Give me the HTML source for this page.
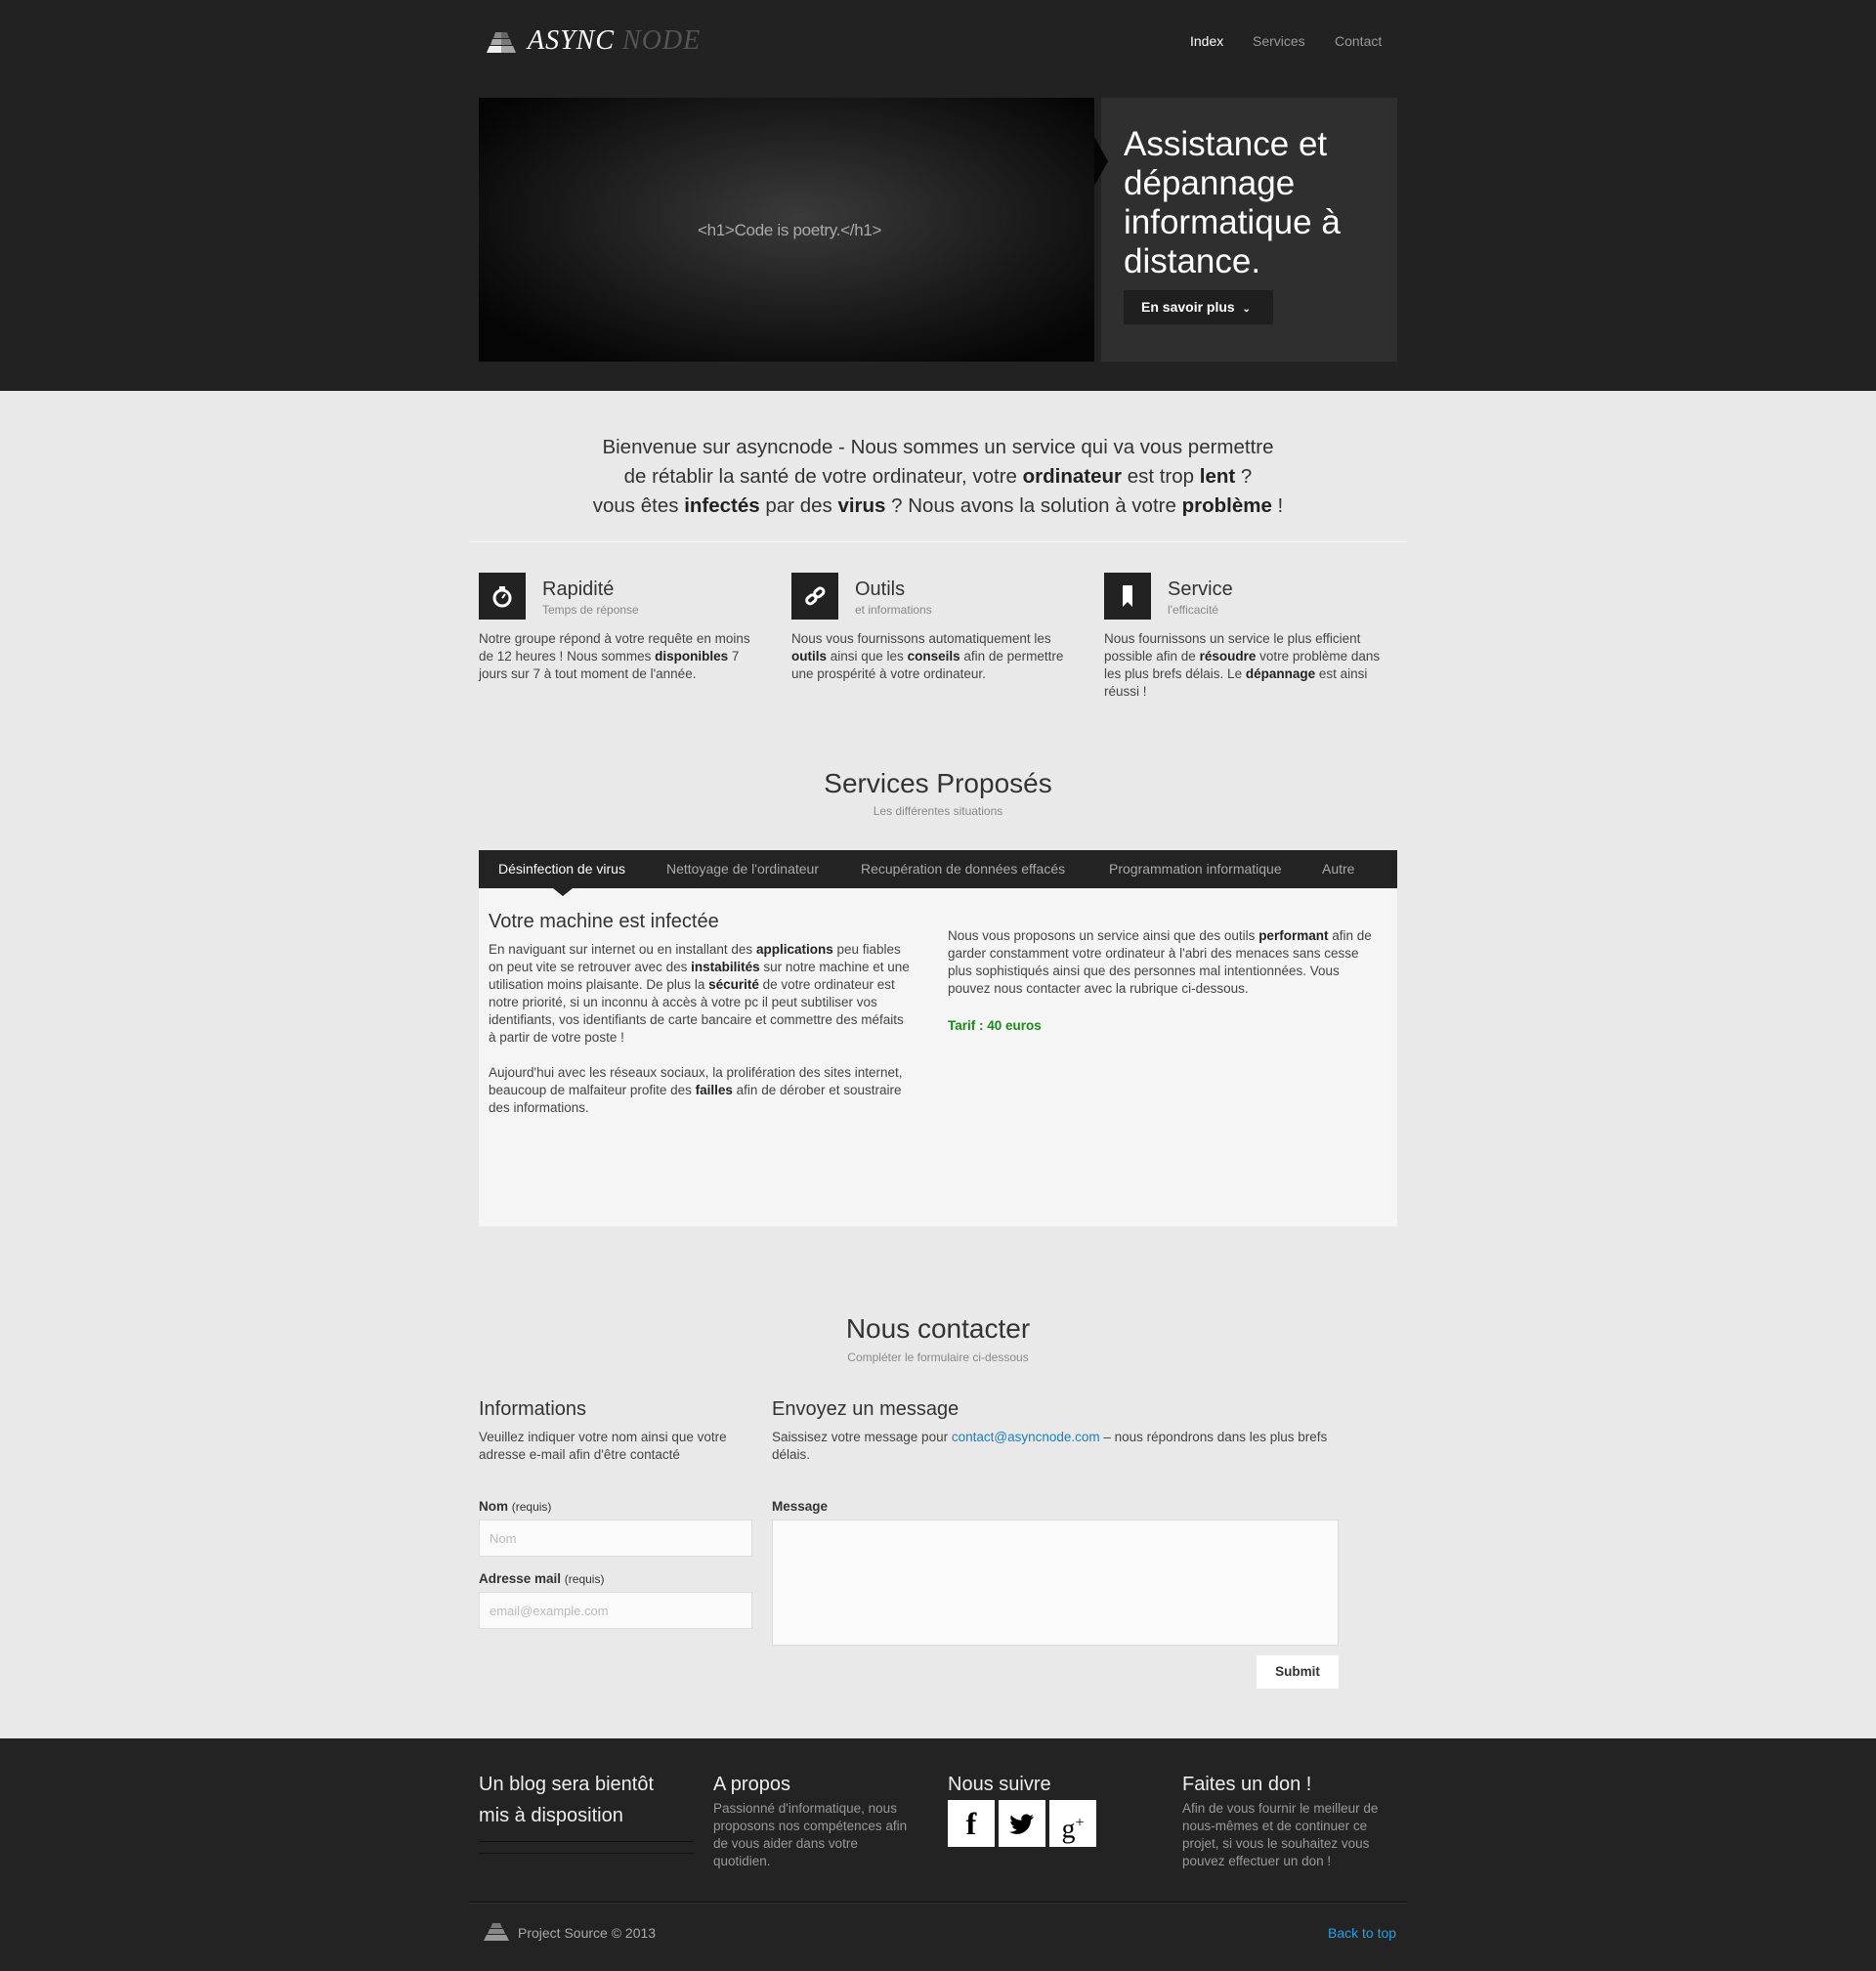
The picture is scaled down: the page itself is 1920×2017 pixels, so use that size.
<!DOCTYPE html>
<html><head><meta charset="utf-8">
<style>
*{box-sizing:border-box;margin:0;padding:0}
body{width:1920px;height:2017px;background:#e9e9e9;font-family:"Liberation Sans",Arial,sans-serif;color:#333;position:relative;overflow:hidden}
.abs{position:absolute}
#hdr{left:0;top:0;width:1920px;height:400px;background:#222}
.nav{top:34px;font-size:14px;color:#999}
#foot{left:0;top:1779px;width:1920px;height:238px;background:#232323}
p{font-size:13.5px;line-height:18px}
b{color:#222}
.ic{width:48px;height:48px;background:#222}
.ft{font-size:20px;color:#333;top:592px}
.fs{font-size:12px;color:#888;top:617px}
.fp{top:645px;width:296px;color:#444}
.tab{top:881px;font-size:14px;color:#aaa}
label{position:absolute;font-size:13.5px;font-weight:bold;color:#333}
label span{font-weight:normal;font-size:12px}
.inp{background:#fafafa;border:1px solid #ddd}
.fh{top:1810px;font-size:20px;color:#eee;line-height:32px}
.fpp{color:#999;font-size:13.5px;line-height:18px}
.soc{top:1842px;width:48px;height:48px;background:#fff;color:#000;text-align:center;font-family:"Liberation Serif",serif;font-weight:bold;font-size:32px;line-height:48px}
</style></head><body>
<div id="hdr" class="abs"></div>
<svg class="abs" style="left:493px;top:33px" width="40" height="22" viewBox="0 0 40 22">
<polygon points="14,0 26,0 28,6 12,6" fill="#888"/><polygon points="11,7 29,7 31,13 9,13" fill="#aaa"/><polygon points="8,14 32,14 35,21 5,21" fill="#eee"/><rect x="20" y="0" width="15" height="22" fill="#222" opacity=".35"/>
</svg>
<div class="abs" style="left:540px;top:26px;font-family:'Liberation Serif',serif;font-style:italic;font-size:28px;letter-spacing:1px;color:#fff">ASYNC <span style="color:#555">NODE</span></div>
<div class="abs nav" style="left:1218px;color:#fff">Index</div>
<div class="abs nav" style="left:1282px">Services</div>
<div class="abs nav" style="left:1366px">Contact</div>
<div class="abs" style="left:490px;top:100px;width:630px;height:270px;background:radial-gradient(ellipse at 52% 45%,#3a3a3a 0%,#1e1e1e 45%,#050505 85%)"></div>
<div class="abs" style="left:714px;top:226px;font-size:17px;color:#aaa;letter-spacing:-0.3px">&lt;h1&gt;Code is poetry.&lt;/h1&gt;</div>
<div class="abs" style="left:1127px;top:100px;width:303px;height:270px;background:#2f2f2f"></div>
<div class="abs" style="left:1120px;top:140px;width:0;height:0;border-top:25px solid transparent;border-bottom:25px solid transparent;border-left:14px solid #050505"></div>
<div class="abs" style="left:1150px;top:128px;font-size:35px;line-height:40px;color:#fff;width:260px">Assistance et dépannage informatique à distance.</div>
<div class="abs" style="left:1150px;top:297px;width:153px;height:35px;background:#1f1f1f;color:#fff;font-size:14px;font-weight:bold;line-height:35px;padding-left:18px">En savoir plus &nbsp;<span style="font-size:10px">⌄</span></div>

<div class="abs" style="left:560px;top:443px;width:800px;text-align:center;font-size:20.5px;line-height:30px;color:#333">Bienvenue sur asyncnode - Nous sommes un service qui va vous permettre<br>de rétablir la santé de votre ordinateur, votre <b>ordinateur</b> est trop <b>lent</b> ?<br>vous êtes <b>infectés</b> par des <b>virus</b> ? Nous avons la solution à votre <b>problème</b> !</div>
<div class="abs" style="left:480px;top:554px;width:960px;height:1px;background:#ccc;border-bottom:1px solid #f6f6f6"></div>

<div class="abs ic" style="left:490px;top:586px"><svg width="48" height="48"><circle cx="24" cy="26" r="8" fill="none" stroke="#fff" stroke-width="3"/><rect x="21" y="14" width="6" height="3" fill="#fff"/><path d="M24 26 L27 22" stroke="#fff" stroke-width="2"/></svg></div>
<div class="abs ft" style="left:555px">Rapidité</div><div class="abs fs" style="left:555px">Temps de réponse</div>
<p class="abs fp" style="left:490px">Notre groupe répond à votre requête en moins de 12 heures ! Nous sommes <b>disponibles</b> 7 jours sur 7 à tout moment de l'année.</p>
<div class="abs ic" style="left:810px;top:586px"><svg width="48" height="48"><g fill="none" stroke="#fff" stroke-width="3"><rect x="15" y="24" width="10" height="7" rx="3.5" transform="rotate(-40 20 27)"/><rect x="23" y="17" width="10" height="7" rx="3.5" transform="rotate(-40 28 20)"/></g></svg></div>
<div class="abs ft" style="left:875px">Outils</div><div class="abs fs" style="left:875px">et informations</div>
<p class="abs fp" style="left:810px">Nous vous fournissons automatiquement les <b>outils</b> ainsi que les <b>conseils</b> afin de permettre une prospérité à votre ordinateur.</p>
<div class="abs ic" style="left:1130px;top:586px"><svg width="48" height="48"><path d="M19 13 H29 V35 L24 30 L19 35 Z" fill="#fff"/></svg></div>
<div class="abs ft" style="left:1195px">Service</div><div class="abs fs" style="left:1195px">l'efficacité</div>
<p class="abs fp" style="left:1130px">Nous fournissons un service le plus efficient possible afin de <b>résoudre</b> votre problème dans les plus brefs délais. Le <b>dépannage</b> est ainsi réussi !</p>

<div class="abs" style="left:660px;top:786px;width:600px;text-align:center;font-size:28px;color:#333">Services Proposés</div>
<div class="abs" style="left:660px;top:823px;width:600px;text-align:center;font-size:12px;color:#888">Les différentes situations</div>
<div class="abs" style="left:490px;top:870px;width:940px;height:39px;background:#232323"></div>
<div class="abs" style="left:490px;top:909px;width:940px;height:346px;background:#f5f5f5"></div>
<div class="abs" style="left:566px;top:909px;width:0;height:0;border-left:10px solid transparent;border-right:10px solid transparent;border-top:8px solid #232323"></div>
<div class="abs tab" style="left:510px;color:#fff">Désinfection de virus</div>
<div class="abs tab" style="left:682px">Nettoyage de l'ordinateur</div>
<div class="abs tab" style="left:881px">Recupération de données effacés</div>
<div class="abs tab" style="left:1135px">Programmation informatique</div>
<div class="abs tab" style="left:1353px">Autre</div>
<div class="abs" style="left:500px;top:932px;font-size:20px;color:#333">Votre machine est infectée</div>
<p class="abs" style="left:500px;top:963px;width:432px;color:#444">En naviguant sur internet ou en installant des <b>applications</b> peu fiables on peut vite se retrouver avec des <b>instabilités</b> sur notre machine et une utilisation moins plaisante. De plus la <b>sécurité</b> de votre ordinateur est notre priorité, si un inconnu à accès à votre pc il peut subtiliser vos identifiants, vos identifiants de carte bancaire et commettre des méfaits à partir de votre poste !<br><br>Aujourd'hui avec les réseaux sociaux, la prolifération des sites internet, beaucoup de malfaiteur profite des <b>failles</b> afin de dérober et soustraire des informations.</p>
<p class="abs" style="left:970px;top:949px;width:435px;color:#444">Nous vous proposons un service ainsi que des outils <b>performant</b> afin de garder constamment votre ordinateur à l'abri des menaces sans cesse plus sophistiqués ainsi que des personnes mal intentionnées. Vous pouvez nous contacter avec la rubrique ci-dessous.</p>
<p class="abs" style="left:970px;top:1041px;color:#1a8a1a;font-weight:bold">Tarif : 40 euros</p>

<div class="abs" style="left:660px;top:1344px;width:600px;text-align:center;font-size:28px;color:#333">Nous contacter</div>
<div class="abs" style="left:660px;top:1382px;width:600px;text-align:center;font-size:12px;color:#888">Compléter le formulaire ci-dessous</div>
<div class="abs" style="left:490px;top:1431px;font-size:20px">Informations</div>
<p class="abs" style="left:490px;top:1462px;width:280px;color:#444">Veuillez indiquer votre nom ainsi que votre adresse e-mail afin d'être contacté</p>
<div class="abs" style="left:790px;top:1431px;font-size:20px">Envoyez un message</div>
<p class="abs" style="left:790px;top:1462px;width:600px;color:#444">Saissisez votre message pour <span style="color:#1a7fc0">contact@asyncnode.com</span> – nous répondrons dans les plus brefs délais.</p>
<label style="left:490px;top:1534px">Nom <span>(requis)</span></label>
<div class="abs inp" style="left:490px;top:1555px;width:280px;height:38px;color:#bbb;font-size:13px;padding:11px 10px">Nom</div>
<label style="left:490px;top:1608px">Adresse mail <span>(requis)</span></label>
<div class="abs inp" style="left:490px;top:1629px;width:280px;height:38px;color:#bbb;font-size:13px;padding:11px 10px">email@example.com</div>
<label style="left:790px;top:1534px">Message</label>
<div class="abs inp" style="left:790px;top:1555px;width:580px;height:129px"></div>
<div class="abs" style="left:1286px;top:1694px;width:84px;height:34px;background:#fff;font-size:13.5px;font-weight:bold;text-align:center;line-height:34px;color:#333">Submit</div>

<div id="foot" class="abs"></div>
<div class="abs fh" style="left:490px;width:200px">Un blog sera bientôt mis à disposition</div>
<div class="abs" style="left:490px;top:1884px;width:220px;height:1px;background:#111"></div>
<div class="abs" style="left:490px;top:1896px;width:220px;height:1px;background:#111"></div>
<div class="abs fh" style="left:730px">A propos</div>
<p class="abs fpp" style="left:730px;top:1842px;width:205px">Passionné d'informatique, nous proposons nos compétences afin de vous aider dans votre quotidien.</p>
<div class="abs fh" style="left:970px">Nous suivre</div>
<div class="abs soc" style="left:970px">f</div>
<div class="abs soc" style="left:1022px"><svg width="48" height="48" viewBox="0 0 48 48"><path d="M36 16c-1 .5-2 .7-3 .8 1-.7 1.8-1.6 2.2-2.8-1 .6-2 1-3.2 1.2a5 5 0 0 0-8.6 4.6c-4.2-.2-7.9-2.2-10.4-5.2-1.4 2.4-.6 5.3 1.6 6.7-.8 0-1.6-.3-2.3-.6 0 2.4 1.7 4.5 4 5-.7.2-1.5.2-2.300.1.7 2 2.5 3.4 4.7 3.5A10 10 0 0 1 11 31.6 14.3 14.3 0 0 0 33 19.5c1-.7 2-1.6 2.6-2.6z" fill="#000" transform="translate(0,1)"/></svg></div>
<div class="abs soc" style="left:1074px;font-weight:normal;font-size:28px">g<sup style="font-size:16px">+</sup></div>
<div class="abs fh" style="left:1210px">Faites un don !</div>
<p class="abs fpp" style="left:1210px;top:1842px;width:225px">Afin de vous fournir le meilleur de nous-mêmes et de continuer ce projet, si vous le souhaitez vous pouvez effectuer un don !</p>
<div class="abs" style="left:480px;top:1946px;width:960px;height:2px;background:#0c0c0c;border-bottom:1px solid #333"></div>
<svg class="abs" style="left:493px;top:1968px" width="30" height="18" viewBox="0 0 30 18"><polygon points="11,0 19,0 21,5 9,5" fill="#777"/><polygon points="8,6 22,6 24,11 6,11" fill="#888"/><polygon points="5,12 25,12 28,18 2,18" fill="#999"/></svg>
<div class="abs" style="left:530px;top:1970px;font-size:14px;color:#aaa">Project Source © 2013</div>
<div class="abs" style="left:1359px;top:1970px;font-size:14px;color:#2a9fe0">Back to top</div>
</body></html>
